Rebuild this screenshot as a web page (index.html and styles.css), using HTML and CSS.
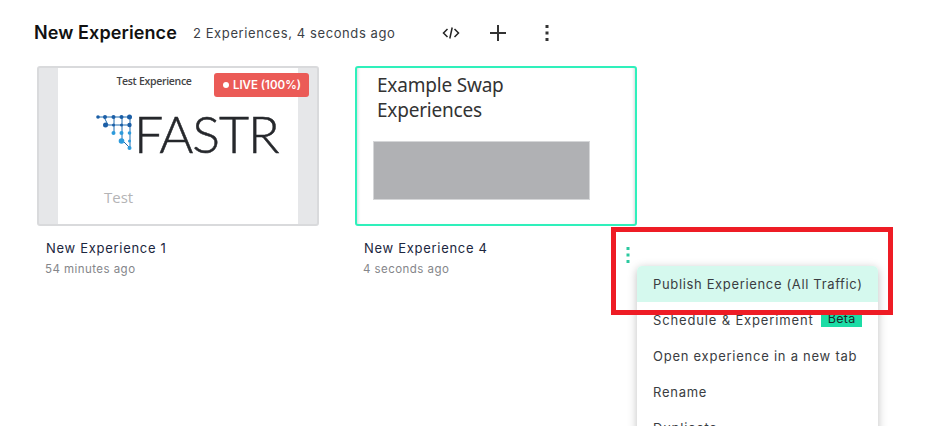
FILE: index.html
```html
<!DOCTYPE html>
<html lang="en">
<head>
<meta charset="utf-8">
<title>New Experience</title>
<link rel="stylesheet" href="styles.css">
</head>
<body>
<main class="page">
  <header class="head">
    <h1 class="title">New Experience</h1>
    <span class="summary">2 Experiences, 4 seconds ago</span>
    <div class="tools">
      <svg class="tool tool-code" width="18" height="14" viewBox="0 0 18 14" fill="none" stroke="#222" stroke-width="1.5"><path d="M5.5 3 1.5 7l4 4M12.5 3l4 4-4 4M10.2 1.5 7.8 12.5"/></svg>
      <svg class="tool tool-plus" width="18" height="18" viewBox="0 0 18 18" fill="none" stroke="#333" stroke-width="2"><path d="M9 1v16M1 9h16"/></svg>
      <svg class="tool tool-more" width="4" height="18" viewBox="0 0 4 18" fill="#333"><rect x=".5" y="1" width="3" height="3"/><rect x=".5" y="7.5" width="3" height="3"/><rect x=".5" y="14" width="3" height="3"/></svg>
    </div>
  </header>
  <section class="cards">
    <article class="card">
      <div class="thumb thumb-live">
        <div class="sheet">
          <div class="sheet-title">Test Experience</div>
          <div class="logo">
            <svg class="logo-mark" width="38" height="38" viewBox="0 0 38 38" fill="none">
              <path d="M2 3H34M8 3 12 11H34M34 3V34M26 3V26L34 34M18 3V19" stroke="#1f6cb0" stroke-width="1"/>
              <g fill="#1b5ea6"><circle cx="2" cy="3" r="1.8"/><circle cx="9" cy="3" r="2"/><circle cx="17.500" cy="3" r="2"/><circle cx="25.500" cy="3" r="2"/><circle cx="33.500" cy="3" r="2.500"/><circle cx="9.500" cy="11" r="2.500"/><circle cx="17.500" cy="11" r="1.500"/><circle cx="25.500" cy="11" r="1.500"/><circle cx="33.500" cy="11" r="2.200"/></g>
              <g fill="#2d9bdc"><circle cx="17.500" cy="19" r="2"/><circle cx="25.500" cy="19" r="2"/><circle cx="33.500" cy="19" r="1.800"/><circle cx="25.500" cy="27" r="2.800"/><circle cx="33.500" cy="27" r="1.500"/><circle cx="33.500" cy="34" r="2"/></g>
            </svg>
            <span class="logo-word">FASTR</span>
          </div>
          <div class="sheet-foot">Test</div>
        </div>
        <span class="badge"><i class="badge-dot"></i>LIVE (100%)</span>
      </div>
      <h2 class="name">New Experience 1</h2>
      <p class="time">54 minutes ago</p>
    </article>
    <article class="card">
      <div class="thumb thumb-active">
        <div class="swap-title">Example Swap<br>Experiences</div>
        <div class="swap-block"></div>
      </div>
      <h2 class="name">New Experience 4</h2>
      <p class="time">4 seconds ago</p>
      <svg class="card-more" width="4" height="16" viewBox="0 0 4 16" fill="#2cc9a0"><rect x=".5" width="3" height="3"/><rect x=".5" y="6.500" width="3" height="3"/><rect x=".5" y="13" width="3" height="3"/></svg>
      <ul class="menu">
        <li class="menu-item menu-item-on">Publish Experience (All Traffic)</li>
        <li class="menu-item menu-item-split">Schedule &amp; Experiment <span class="beta">Beta</span></li>
        <li class="menu-item">Open experience in a new tab</li>
        <li class="menu-item">Rename</li>
        <li class="menu-item">Duplicate</li>
      </ul>
    </article>
  </section>
  <div class="callout"></div>
</main>
</body>
</html>
```
FILE: styles.css
```css
* { box-sizing: border-box; }
html, body { margin: 0; height: 100%; }
body { background: #fff; overflow: hidden; font-family: "Inter", "Noto Sans", sans-serif; }
.page { position: relative; height: 426px; overflow: hidden; }
.head { display: flex; align-items: center; height: 66px; padding-left: 34px; }
.title { margin: 0; font-size: 18px; line-height: 22px; font-weight: 600; letter-spacing: .1px; color: #111; }
.summary { margin-left: 16px; font-size: 13px; color: #3c3f46; letter-spacing: .6px; }
.tools { display: flex; align-items: center; margin-left: 47px; gap: 29px; }
.tool { display: block; }
.tool-more { margin-left: 9px; }
.cards { display: flex; gap: 36px; padding-left: 37px; }
.card { position: relative; width: 282px; }
.thumb { position: relative; height: 160px; border-radius: 3px; overflow: hidden; background: #fff; }
.thumb-live { display: flex; justify-content: center; background: #e6e7e9; border: 2px solid #d9dadc; }
.thumb-active { border: 2px solid #2ff0bb; padding: 5px 0 0 20px; box-shadow: inset 3px 0 3px -2px #d8d8dc, inset -3px 0 3px -2px #d8d8dc; }
.sheet { display: flex; flex-direction: column; width: 240px; height: 100%; background: #fff; }
.sheet-title { padding-right: 48px; margin-top: 5px; height: 16px; font: 600 10.500px/16px "Open Sans", sans-serif; letter-spacing: -.3px; text-align: center; color: #444446; }
.logo { display: flex; align-items: center; gap: 0; margin: 25px 0 0 38px; height: 38px; }
.logo-mark { display: block; flex: none; }
.logo-word { font: 300 52px/38px "Lato", sans-serif; letter-spacing: -1.1px; color: #26282c; -webkit-text-stroke: .5px #26282c; }
.sheet-foot { margin: 35px 0 0 46px; font: 400 15px/20px "Open Sans", sans-serif; color: #b4b4b6; }
.badge { position: absolute; top: 5px; right: 8px; display: flex; align-items: center; gap: 4px; height: 24px; padding: 0 8px 0 9px; border-radius: 3px; background: #eb5b57; color: #fff; font-size: 11.500px; font-weight: 600; white-space: nowrap; }
.badge-dot { width: 6px; height: 6px; border-radius: 50%; background: #fff; }
.swap-title { font: 400 19px/25px "Noto Sans", sans-serif; letter-spacing: -.2px; color: #333; }
.swap-block { width: 217px; height: 59px; margin: 18px 0 0 -4px; background: #b0b1b4; border: 1px solid #d5d6d8; }
.name { margin: 13px 0 0 9px; font-size: 13px; line-height: 18px; font-weight: 400; letter-spacing: .7px; color: #1c2740; }
.time { margin: 4px 0 0 8px; font-size: 11.500px; line-height: 16px; letter-spacing: .45px; color: #85868a; }
.card-more { position: absolute; left: 271px; top: 181px; display: block; }
.menu { position: absolute; left: 282px; top: 200px; width: 241px; margin: 0; padding: 0; list-style: none; background: #fff; border-radius: 5px 5px 0 0; box-shadow: 0 2px 10px rgba(0, 0, 0, .25); }
.menu-item { display: flex; align-items: center; height: 36px; padding: 0 16px; font-size: 13px; letter-spacing: .75px; color: #3a3d42; white-space: nowrap; }
.menu-item-on { background: #d5f9ee; border-radius: 5px 5px 0 0; letter-spacing: .65px; }
.menu-item-split { justify-content: space-between; letter-spacing: .85px; }
.beta { margin-top: -1px; padding: 0 6.500px; height: 15px; line-height: 14px; font-size: 12.500px; letter-spacing: .3px; color: #1a2a2a; background: #1cdca5; }
.callout { position: absolute; left: 611px; top: 227px; width: 282px; height: 88px; border: 5px solid #ee1c25; }
```
